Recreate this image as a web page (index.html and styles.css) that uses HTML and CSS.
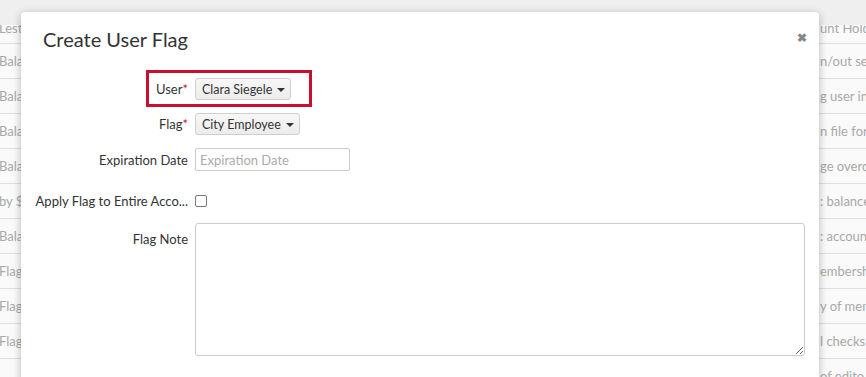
FILE: index.html
```html
<!DOCTYPE html>
<html>
<head>
<meta charset="utf-8">
<link rel="stylesheet" href="styles.css">
</head>
<body>
<div class="page">
  <div class="topband"></div>
  <div class="rows">
    <div class="row"><span class="lt">Lest</span><span class="rt">unt Hold</span></div>
    <div class="row"><span class="lt">Bala</span><span class="rt">n/out set</span></div>
    <div class="row"><span class="lt">Bala</span><span class="rt">g user int</span></div>
    <div class="row"><span class="lt">Bala</span><span class="rt">n file for</span></div>
    <div class="row"><span class="lt">Bala</span><span class="rt">ge overdu</span></div>
    <div class="row"><span class="lt">by $</span><span class="rt">: balance</span></div>
    <div class="row"><span class="lt">Bala</span><span class="rt">: account</span></div>
    <div class="row"><span class="lt">Flag</span><span class="rt">embersh</span></div>
    <div class="row"><span class="lt">Flag</span><span class="rt">y of mem</span></div>
    <div class="row"><span class="lt">Flag</span><span class="rt">l checks a</span></div>
    <div class="row"><span class="lt"></span><span class="rt">of edito</span></div>
  </div>
</div>

<div class="modal">
  <div class="modal-header">
    <h2 class="title">Create User Flag</h2>
    <span class="close">&#10006;</span>
  </div>
  <div class="modal-body">
    <div class="frow r-user">
      <label class="lbl">User<span class="req">*</span></label>
      <div class="ctl"><span class="sel">Clara Siegele <span class="caret"></span></span></div>
    </div>
    <div class="frow r-flag">
      <label class="lbl">Flag<span class="req">*</span></label>
      <div class="ctl"><span class="sel">City Employee <span class="caret"></span></span></div>
    </div>
    <div class="frow r-date">
      <label class="lbl">Expiration Date</label>
      <div class="ctl"><input class="inp" type="text" placeholder="Expiration Date"></div>
    </div>
    <div class="frow r-check">
      <label class="lbl">Apply Flag to Entire Acco...</label>
      <div class="ctl"><span class="chk"></span></div>
    </div>
    <div class="frow r-note">
      <label class="lbl lbl-top">Flag Note</label>
      <div class="ctl"><textarea class="ta"></textarea></div>
    </div>
    <div class="highlight"></div>
  </div>
</div>
</body>
</html>
```
FILE: styles.css
```css
html, body {
  margin: 0;
  padding: 0;
  height: 100%;
  overflow: hidden;
}
body {
  background: #fafafa;
  font-family: Lato, "Open Sans", sans-serif;
  color: #333;
}
.page {
  position: relative;
  height: 377px;
}
.topband {
  position: absolute;
  left: 0;
  top: 0;
  width: 100%;
  height: 25px;
  background: #efefef;
  z-index: 1;
}
.rows {
  padding-top: 8px;
}
.row {
  height: 35px;
  border-bottom: 1px solid #dedede;
  display: flex;
  align-items: center;
  font-size: 13px;
  color: #a8a8a8;
  box-sizing: border-box;
}
.row:first-child {
  height: 36px;
  padding-top: 4px;
}
.lt {
  margin-left: -1px;
}
.rt {
  white-space: nowrap;
  margin-left: auto;
  width: 46px;
  overflow: hidden;
}

.modal {
  position: absolute;
  left: 21px;
  top: 12px;
  width: 798px;
  height: 420px;
  background: #fff;
  border-radius: 4px;
  box-shadow: 0 2px 8px rgba(0,0,0,0.28);
  z-index: 2;
}
.modal-header {
  display: flex;
  align-items: flex-start;
  justify-content: space-between;
  padding: 14px 12px 0 22px;
  height: 40px;
  box-sizing: border-box;
}
.title {
  margin: 0;
  font-weight: 400;
  font-size: 20px;
  line-height: 26px;
  color: #333;
}
.close {
  font-size: 12px;
  color: #888;
  font-weight: bold;
  margin-top: 6px;
  line-height: 12px;
}
.modal-body {
  position: relative;
  padding: 26px 14px 0 14px;
}
.frow {
  display: grid;
  grid-template-columns: 153px 1fr;
  column-gap: 7px;
  align-items: center;
}
.r-flag { margin-top: 13px; }
.r-date { margin-top: 13px; }
.r-check { margin-top: 19px; height: 22px; }
.r-note { margin-top: 11px; align-items: start; }
.lbl {
  text-align: right;
  font-size: 13px;
  color: #333;
  white-space: nowrap;
  overflow: hidden;
}
.lbl-top {
  padding-top: 8px;
}
.req {
  color: #c8102e;
}
.ctl {
  display: flex;
  align-items: center;
}
.sel {
  display: inline-flex;
  align-items: center;
  height: 22px;
  box-sizing: border-box;
  padding: 0 5px 0 6px;
  border: 1px solid #cfcfcf;
  border-radius: 3px;
  background: linear-gradient(#f7f7f7, #ececec);
  font-size: 12.5px;
  color: #333;
  gap: 5px;
}
.caret {
  width: 0;
  height: 0;
  border-left: 4px solid transparent;
  border-right: 4px solid transparent;
  border-top: 4px solid #333;
  margin-top: 1px;
}
.inp {
  width: 155px;
  height: 23px;
  box-sizing: border-box;
  border: 1px solid #ccc;
  border-radius: 2px;
  padding: 0 4px;
  font-family: Lato, "Open Sans", sans-serif;
  font-size: 13px;
  color: #333;
  margin: 0;
}
.inp::placeholder {
  color: #aaa;
}
.chk {
  display: inline-block;
  width: 12px;
  height: 12px;
  border: 1px solid #777;
  border-radius: 2px;
  box-sizing: border-box;
  background: #fff;
}
.ta {
  width: 610px;
  height: 133px;
  box-sizing: border-box;
  border: 1px solid #ccc;
  border-radius: 3px;
  margin: 0;
  padding: 4px;
  display: block;
  font-family: Lato, sans-serif;
}
.highlight {
  position: absolute;
  left: 125px;
  top: 18px;
  width: 166px;
  height: 37px;
  box-sizing: border-box;
  border: 3px solid #c8102e;
}
```
